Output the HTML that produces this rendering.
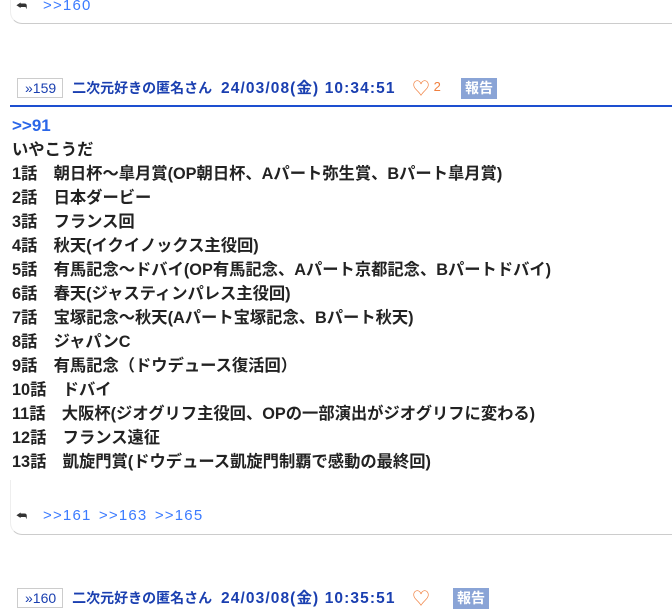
<!DOCTYPE html>
<html><head><meta charset="utf-8"><style>
body{margin:0;background:#fff;font-family:"Liberation Sans","Noto Sans CJK JP",sans-serif;width:672px;height:602px;overflow:hidden;position:relative}
.card{position:absolute;left:10px;right:-20px;border-bottom:1px solid #ccc;border-radius:0 0 0 12px;border-left:1px solid #eee}
.refs{position:absolute;left:16px;font-size:15px;color:#3b7bff;letter-spacing:1.2px;word-spacing:2px}
.refs .ic{display:inline-block;width:14px;color:#333;font-size:12px;margin-right:13px;letter-spacing:0}
.hdr{position:absolute;left:17px;font-size:14px;font-weight:bold;color:#1a3fb0;white-space:nowrap;height:20px;line-height:20px}
.hdr .d{font-size:15.5px;letter-spacing:1.1px;margin-left:5px}
.num{display:inline-block;border:1px solid #ccc;padding:0 6px 0 7px;font-weight:normal;color:#1a3fb0;font-size:14px;line-height:18px;margin-right:9px}
.heart{position:absolute;color:#f08040;font-weight:normal;font-size:18px}
.rep{position:absolute;background:#8aa4d6;color:#fff;font-size:14px;padding:0 4px;line-height:21px;font-weight:bold}
.line{position:absolute;left:10px;right:0;top:105px;border-top:2px solid #1d4fd0}
.body{position:absolute;left:12px;top:114px;font-size:16.3px;font-weight:bold;color:#222;line-height:24px;white-space:nowrap}
.body .a{color:#2a66e8;font-size:17px}
</style></head><body>
<div class="card" style="top:-20px;height:43px"></div>
<div class="refs" style="top:-3px"><span class="ic">⮪</span>&gt;&gt;160</div>
<div class="hdr" style="top:78px"><span class="num">»159</span>二次元好きの匿名さん <span class="d">24/03/08(金) 10:34:51</span></div>
<div class="heart" style="left:412px;top:75px">♡<span style="font-size:13px;vertical-align:4px"> 2</span></div>
<div class="rep" style="left:461px;top:78px">報告</div>
<div class="line"></div>
<div class="body"><span class="a">&gt;&gt;91</span><br>いやこうだ<br>1話　朝日杯～皐月賞(OP朝日杯、Aパート弥生賞、Bパート皐月賞)<br>2話　日本ダービー<br>3話　フランス回<br>4話　秋天(イクイノックス主役回)<br>5話　有馬記念～ドバイ(OP有馬記念、Aパート京都記念、Bパートドバイ)<br>6話　春天(ジャスティンパレス主役回)<br>7話　宝塚記念～秋天(Aパート宝塚記念、Bパート秋天)<br>8話　ジャパンC<br>9話　有馬記念（ドウデュース復活回）<br>10話　ドバイ<br>11話　大阪杯(ジオグリフ主役回、OPの一部演出がジオグリフに変わる)<br>12話　フランス遠征<br>13話　凱旋門賞(ドウデュース凱旋門制覇で感動の最終回)</div>
<div class="card" style="top:480px;height:54px"></div>
<div class="refs" style="top:507px"><span class="ic">⮪</span>&gt;&gt;161 &gt;&gt;163 &gt;&gt;165</div>
<div class="hdr" style="top:588px"><span class="num">»160</span>二次元好きの匿名さん <span class="d">24/03/08(金) 10:35:51</span></div>
<div class="heart" style="left:412px;top:585px">♡</div>
<div class="rep" style="left:453px;top:588px">報告</div>
</body></html>
